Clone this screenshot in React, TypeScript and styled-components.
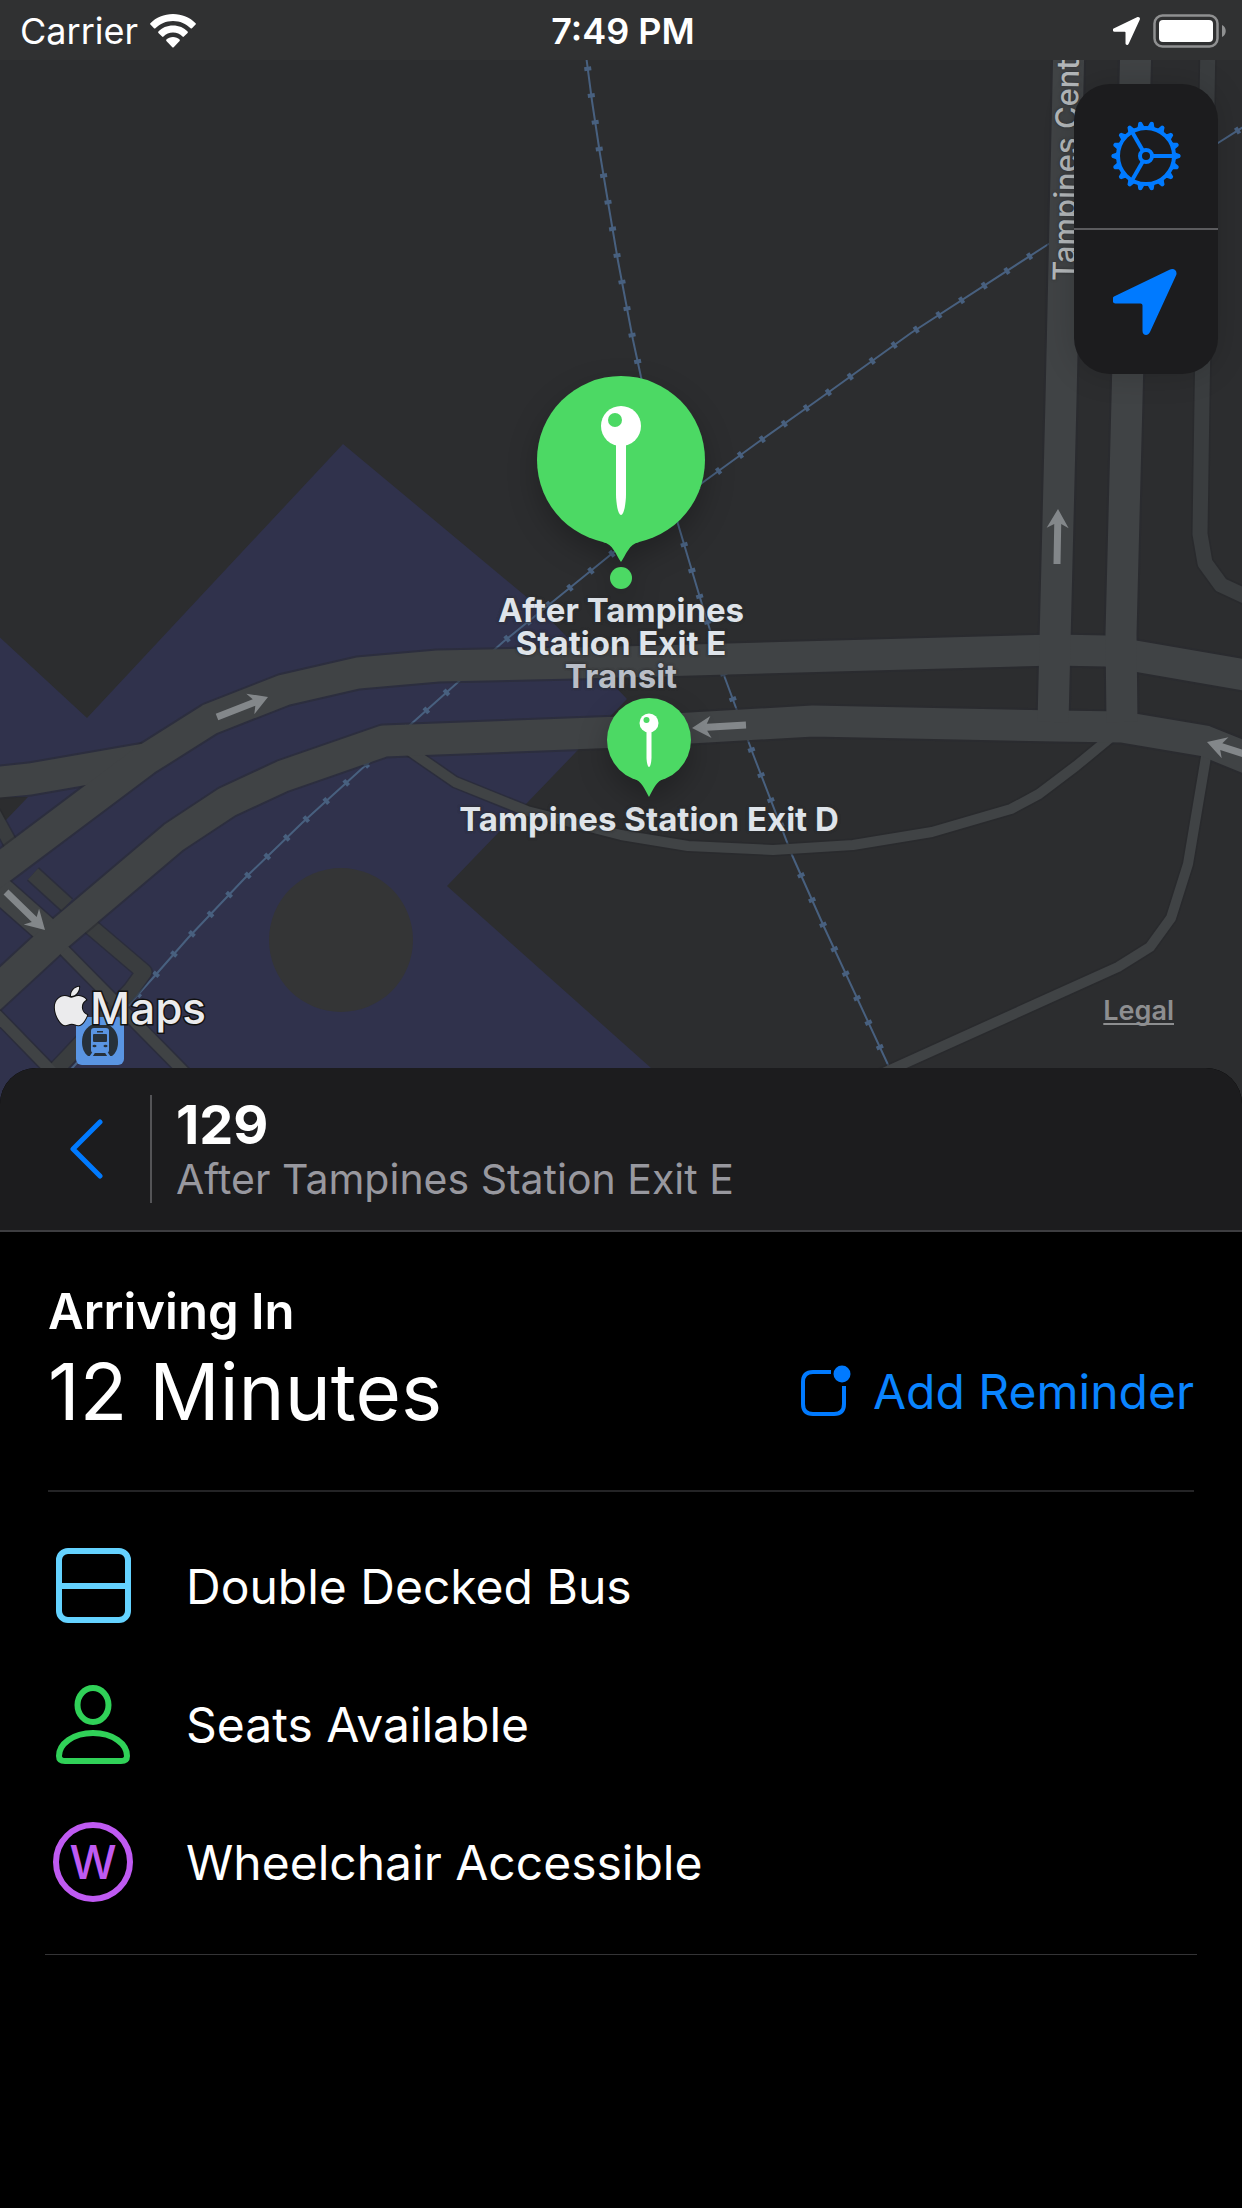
import React from 'react';
import styled, { createGlobalStyle } from 'styled-components';
import { FaApple } from 'react-icons/fa';

const BLUE = '#007aff';
const GREEN = '#4cd964';

const GlobalStyle = createGlobalStyle`
  *, *::before, *::after { box-sizing: border-box; }
  body {
    margin: 0;
    background: #000;
    color: #fff;
    font-family: Inter, "Liberation Sans", sans-serif;
  }
  h1, h2, p, ul { margin: 0; padding: 0; }
  button { font: inherit; border: 0; padding: 0; background: none; cursor: pointer; }
  svg { display: block; }
`;

const Screen = styled.div`
  min-height: 100vh;
  display: flex;
  flex-direction: column;
`;

const StatusBar = styled.header`
  height: 60px;
  padding: 2px 16px 0 20px;
  display: grid;
  grid-template-columns: 1fr auto 1fr;
  align-items: center;
  background: #303132;
  font-size: 36px;
  line-height: 58px;
`;

const StatusGroup = styled.div<{ $end?: boolean }>`
  display: flex;
  align-items: center;
  justify-content: ${(p) => (p.$end ? 'flex-end' : 'flex-start')};
  gap: 12px;
`;

const Clock = styled.time`
  font-weight: 600;
`;

const MapArea = styled.section`
  position: relative;
  height: 1048px;
  margin-bottom: -40px;
  overflow: hidden;
  background: #2c2d2f;
`;

const MapCanvas = styled.svg`
  width: 100%;
  height: 100%;
`;

const Pin = styled.div<{ $shift: number; $top: number }>`
  position: absolute;
  left: calc(50% + ${(p) => p.$shift}px);
  top: ${(p) => p.$top}px;
  transform: translateX(-50%);
  display: flex;
  flex-direction: column;
  align-items: center;
  filter: drop-shadow(0 12px 14px rgba(0, 0, 0, 0.25));
`;

const PlaceLabel = styled.div<{ $shift: number; $top: number }>`
  position: absolute;
  left: calc(50% + ${(p) => p.$shift}px);
  top: ${(p) => p.$top}px;
  transform: translateX(-50%);
  font-size: 33px;
  line-height: 33px;
  font-weight: 700;
  text-align: center;
  white-space: nowrap;
  color: #dfe4ea;
  text-shadow: 0 0 3px #2c2d2f, 0 0 3px #2c2d2f;
`;

const PlaceKind = styled.div`
  color: #b9bec7;
`;

const StreetName = styled.div`
  position: absolute;
  left: calc(50% + 425px);
  bottom: 827px;
  writing-mode: vertical-rl;
  transform: rotate(181deg);
  font-size: 31px;
  line-height: 40px;
  font-weight: 500;
  white-space: nowrap;
  color: #b2b6b8;
  text-shadow: 0 0 3px #2c2d2f;
`;

const MapControls = styled.div`
  position: absolute;
  top: 24px;
  right: 24px;
  width: 144px;
  border-radius: 36px;
  background: #1c1c1e;
  overflow: hidden;
  box-shadow: 0 0 32px rgba(0, 0, 0, 0.16);
`;

const ControlButton = styled.button`
  width: 100%;
  height: 144px;
  display: grid;
  place-items: center;

  & + & {
    height: 146px;
    border-top: 2px solid #5b5b5e;
  }
`;

const StationBadge = styled.div`
  position: absolute;
  left: 76px;
  bottom: 43px;
`;

const Attribution = styled.div`
  position: absolute;
  left: 54px;
  bottom: 72px;
  display: flex;
  align-items: center;
  gap: 2px;
  font-size: 44px;
  line-height: 56px;
  font-weight: 500;
  color: #ebebed;
  -webkit-text-stroke: 3px #111;
  paint-order: stroke fill;

  svg {
    width: 34px;
    height: 44px;
    margin-bottom: 4px;
    overflow: visible;
    stroke: #111;
    stroke-width: 24px;
    paint-order: stroke fill;
  }
`;

const LegalLink = styled.a`
  position: absolute;
  right: 68px;
  bottom: 80px;
  font-size: 27px;
  line-height: 34px;
  font-weight: 600;
  color: #8d8e90;
  text-decoration: underline;
  text-decoration-thickness: 2px;
  text-underline-offset: 3px;
  text-decoration-skip-ink: none;
`;

const Sheet = styled.main`
  position: relative;
  flex: 1;
  display: flex;
  flex-direction: column;
  border-radius: 36px 36px 0 0;
  background: #000;
  overflow: hidden;
`;

const SheetHeader = styled.div`
  display: flex;
  align-items: center;
  height: 164px;
  padding: 0 48px 0 46px;
  background: #1c1c1e;
  border-bottom: 2px solid #3d3d40;
`;

const BackButton = styled.button`
  width: 80px;
  height: 108px;
  display: grid;
  place-items: center;
`;

const HeaderTitles = styled.div`
  margin-left: 24px;
  padding-left: 24px;
  height: 108px;
  border-left: 2px solid #545457;
`;

const ServiceNumber = styled.h1`
  font-size: 54px;
  line-height: 60px;
  font-weight: 700;
`;

const StopName = styled.p`
  font-size: 41px;
  line-height: 48px;
  color: #98989f;
`;

const Details = styled.div`
  padding: 0 48px;
`;

const Arrival = styled.section`
  display: flex;
  align-items: flex-end;
  justify-content: space-between;
  padding: 50px 0 48px;
  border-bottom: 2px solid #242426;
`;

const ArrivalTitle = styled.h2`
  font-size: 49px;
  line-height: 60px;
  font-weight: 600;
`;

const ArrivalTime = styled.p`
  font-size: 78px;
  line-height: 100px;
`;

const ReminderButton = styled.button`
  display: flex;
  align-items: center;
  gap: 21px;
  height: 102px;
  font-size: 48px;
  color: #0a84ff;
`;

const FeatureList = styled.ul`
  list-style: none;
  margin: 0 -3px;
  padding: 25px 3px 23px;
  border-bottom: 1px solid #343436;
`;

const Feature = styled.li`
  display: flex;
  align-items: center;
  gap: 48px;
  height: 138px;
  font-size: 48px;

  svg { width: 90px; height: 90px; flex: none; }
`;

type Pt = [number, number];
const line = (pts: Pt[]) => 'M' + pts.map((p) => p.join(' ')).join('L');

const majorRoads = [
  line([[-20, 784], [30, 779], [145, 759]]),
  line([[-20, 884], [145, 760], [210, 719], [284, 690], [358, 673], [438, 666], [621, 662], [1055, 650], [1106, 651], [1262, 678]]),
  line([[-20, 1007], [57, 936], [174, 837], [227, 802], [283, 776], [384, 741], [621, 732], [813, 721], [1057, 726], [1122, 727], [1205, 741], [1262, 764]]),
  line([[1069, 40], [1061, 400], [1053, 722]]),
  line([[1136, 40], [1127, 400], [1121, 634], [1122, 722]]),
];

const sideRoads: { d: string; w: number }[] = [
  { d: line([[1208, 40], [1202, 400], [1200, 534], [1205, 563], [1221, 585], [1262, 604]]), w: 15 },
  { d: line([[-10, 806], [14, 850]]), w: 13 },
  { d: line([[33, 874], [67, 905]]), w: 15 },
  { d: line([[90, 926], [144, 972], [131, 990], [50, 1076]]), w: 15 },
];

const minorRoads: { d: string; w: number }[] = [
  { d: line([[400, 744], [455, 782], [527, 811], [621, 835], [688, 846], [773, 850], [853, 845], [932, 832], [1011, 809], [1039, 794], [1076, 766], [1110, 738]]), w: 10 },
  { d: line([[1208, 745], [1188, 864], [1171, 918], [1150, 947], [1118, 967], [870, 1079]]), w: 10 },
  { d: line([[-20, 872], [57, 940]]), w: 26 },
  { d: line([[60, 946], [190, 1078]]), w: 11 },
  { d: line([[-10, 1008], [60, 1080]]), w: 11 },
];

const transitLines = [
  line([[584, 40], [592, 101], [600, 154], [609, 208], [618, 261], [633, 340], [641, 377], [678, 524], [701, 601], [725, 678], [753, 754], [792, 855], [825, 929], [890, 1069]]),
  line([[1262, 115], [1218, 143], [1047, 245], [911, 333], [815, 402], [757, 443], [702, 483], [614, 552], [503, 642], [410, 725], [302, 823], [244, 879], [188, 938], [152, 979], [66, 1075]]),
];

const arrows: { from: Pt; to: Pt }[] = [
  { from: [217, 717], to: [268, 697] },
  { from: [6, 892], to: [45, 930] },
  { from: [1057, 564], to: [1058, 509] },
  { from: [746, 725], to: [692, 728] },
  { from: [1260, 759], to: [1207, 742] },
];

const DirectionArrow = ({ from, to }: { from: Pt; to: Pt }) => {
  const dx = to[0] - from[0];
  const dy = to[1] - from[1];
  const len = Math.hypot(dx, dy);
  const angle = (Math.atan2(dy, dx) * 180) / Math.PI;
  return (
    <path
      transform={`translate(${from[0]} ${from[1]}) rotate(${angle})`}
      d={`M0-3.5H${len - 15}L${len - 19}-11L${len} 0L${len - 19} 11L${len - 15} 3.5H0Z`}
      fill="#83878a"
    />
  );
};

const MapDrawing = () => (
  <MapCanvas viewBox="0 60 1242 1048" preserveAspectRatio="xMidYMid slice" aria-hidden="true">
    <path
      d="M343 444L535 604L627 699L447 886L651 1068L700 1112H-300V820H6L28 797L-300 790V360L87 718Z"
      fill="#30324c"
    />
    <ellipse cx="341" cy="940" rx="72" ry="72" fill="#343536" />
    {transitLines.map((d) => (
      <g key={d} fill="none" stroke="#48607f">
        <path d={d} strokeWidth="2" />
        <path d={d} strokeWidth="7" strokeDasharray="4 23" />
      </g>
    ))}
    <g fill="none" strokeLinejoin="round">
      {[...sideRoads, ...minorRoads].map((r) => (
        <path key={r.d} d={r.d} stroke="#26282c" strokeOpacity="0.5" strokeWidth={r.w + 3} />
      ))}
      {sideRoads.map((r) => (
        <path key={r.d} d={r.d} stroke="#3a3d3f" strokeWidth={r.w} />
      ))}
      {majorRoads.map((d) => (
        <path key={d} d={d} stroke="#28292f" strokeOpacity="0.5" strokeWidth="35" />
      ))}
      {minorRoads.map((r) => (
        <path key={r.d} d={r.d} stroke="#404345" strokeWidth={r.w} />
      ))}
      {majorRoads.map((d) => (
        <path key={d} d={d} stroke="#404345" strokeWidth="31" />
      ))}
    </g>
    {arrows.map((a) => (
      <DirectionArrow key={a.from.join()} {...a} />
    ))}
  </MapCanvas>
);

const LargePin = () => (
  <svg width="168" height="214" viewBox="0 0 168 214" role="img" aria-label="Selected stop">
    <circle cx="84" cy="84" r="84" fill={GREEN} />
    <path d="M66 166C76 168 79 179 84 186C89 179 92 168 102 166Z" fill={GREEN} />
    <circle cx="84" cy="202" r="11" fill={GREEN} />
    <path d="M79 60h10v58c0 9-2 21-5 21s-5-12-5-21Z" fill="#fff" />
    <circle cx="84" cy="50" r="20" fill="#fff" />
    <circle cx="78" cy="44" r="7" fill={GREEN} />
  </svg>
);

const SmallPin = () => (
  <svg width="84" height="99" viewBox="0 0 84 99" role="img" aria-label="Stop">
    <circle cx="42" cy="42" r="42" fill={GREEN} />
    <path d="M26 80C35 83 38 92 42 99C46 92 49 83 58 80Z" fill={GREEN} />
    <path d="M39.500 30h5v29c0 4-1 10-2.500 10s-2.500-6-2.500-10Z" fill="#fff" />
    <circle cx="42" cy="25" r="9.500" fill="#fff" />
    <circle cx="39.500" cy="22" r="3" fill={GREEN} />
  </svg>
);

const WifiIcon = () => (
  <svg width="46" height="34" viewBox="0 0 46 34" aria-hidden="true" fill="#fff">
    <path d="M23 0C32 0 40 3.500 45.600 9.200q.6.700 0 1.400L42 14.200q-.7.600-1.400 0C36 9.800 30 7 23 7S10 9.800 5.400 14.200q-.7.600-1.400 0L.4 10.600q-.6-.7 0-1.400C6 3.500 14 0 23 0Z" />
    <path d="M23 11.500c6 0 11 2.300 14.600 6q.6.700 0 1.400l-3.700 3.700q-.7.600-1.400 0c-2.500-2.500-5.700-4-9.500-4s-7 1.500-9.500 4q-.7.600-1.400 0l-3.700-3.700q-.6-.7 0-1.400c3.600-3.700 8.600-6 14.600-6Z" />
    <path d="M23 23c2.600 0 5 1 6.600 2.600q.6.700 0 1.400l-5.900 6.200q-.7.600-1.400 0L16.400 27q-.6-.7 0-1.400C18 24 20.400 23 23 23Z" />
  </svg>
);

const ArrowGlyph = ({ size, color }: { size: number; color: string }) => (
  <svg width={size} height={size} viewBox="1 0 66 66" aria-hidden="true">
    <path
      d="M57.500.8C62-1.500 66 2 64 6.500L38 63c-2 4.500-7.500 3.500-7.500-1V36.500q0-2-2-2H4.500c-5 0-6-5-2-7.300Z"
      fill={color}
    />
  </svg>
);

const BatteryIcon = () => (
  <svg width="73" height="34" viewBox="0 0 73 34" aria-hidden="true">
    <rect x="1.500" y="1.500" width="63" height="31" rx="8" fill="none" stroke="#8f9091" strokeWidth="2.500" />
    <rect x="6" y="6" width="54" height="22" rx="4" fill="#fff" />
    <path d="M69 11c5 2 5 10 0 12Z" fill="#8f9091" />
  </svg>
);

const teeth = Array.from({ length: 18 }, (_, i) => i * 20);

const GearIcon = () => (
  <svg width="72" height="72" viewBox="-36 -36 72 72" aria-hidden="true">
    <g fill={BLUE}>
      {teeth.map((a) => (
        <path key={a} transform={`rotate(${a})`} d="M28-4.500L30.500-3L34-1.800Q35.500 0 34 1.800L30.500 3L28 4.500Z" />
      ))}
    </g>
    <g fill="none" stroke={BLUE} strokeWidth="4">
      <circle r="28" />
      <circle r="6" />
      {[0, 120, 240].map((a) => (
        <path key={a} transform={`rotate(${a})`} d="M7 0H28" />
      ))}
    </g>
  </svg>
);

const StationIcon = () => (
  <svg width="48" height="48" viewBox="0 0 48 48" role="img" aria-label="Train station">
    <rect width="48" height="48" rx="6" fill="#5a95e2" />
    <path d="M15 8h18c6 4 9 9 9 17 0 6-2 11-6 14H12C8 36 6 31 6 25 6 17 9 12 15 8Z" fill="#27313a" />
    <path d="M18 11h12q3 0 3 3v19q0 3-3 3H18q-3 0-3-3V14q0-3 3-3Z" fill="#5a95e2" />
    <rect x="17" y="17" width="14" height="8" rx="1" fill="#27313a" />
    <rect x="21" y="14" width="6" height="1.500" fill="#27313a" />
    <ellipse cx="18.500" cy="29" rx="2" ry="1.200" fill="#27313a" />
    <ellipse cx="29.500" cy="29" rx="2" ry="1.200" fill="#27313a" />
    <path d="M18 35L14 41M30 35L34 41" stroke="#5a95e2" strokeWidth="2.500" />
  </svg>
);

const ChevronIcon = () => (
  <svg width="34" height="60" viewBox="0 0 34 60" aria-hidden="true">
    <path d="M31 3L4 30L31 57" fill="none" stroke={BLUE} strokeWidth="5" strokeLinecap="round" strokeLinejoin="round" />
  </svg>
);

const ReminderIcon = () => (
  <svg width="52" height="52" viewBox="0 0 52 52" aria-hidden="true">
    <path d="M31 7H13Q3 7 3 17V39Q3 49 13 49H34Q44 49 44 39V21" fill="none" stroke={BLUE} strokeWidth="4" />
    <circle cx="42" cy="9" r="8.500" fill={BLUE} />
  </svg>
);

const DeckerIcon = () => (
  <svg viewBox="0 0 90 90" aria-hidden="true" fill="none" stroke="#64d2ff" strokeWidth="6">
    <rect x="11" y="10" width="69" height="69" rx="9" />
    <path d="M11 45H80" />
  </svg>
);

const PersonIcon = () => (
  <svg viewBox="0 0 90 90" aria-hidden="true" fill="none" stroke="#30d158" strokeWidth="6">
    <ellipse cx="45" cy="26" rx="15.500" ry="17" />
    <path d="M17 82Q11 82 11 77C11 65 25 54 45 54S79 65 79 77Q79 82 73 82Z" />
  </svg>
);

const WheelchairIcon = () => (
  <svg viewBox="0 0 90 90" aria-hidden="true">
    <circle cx="45" cy="45" r="37" fill="none" stroke="#bf5af2" strokeWidth="6" />
    <text x="45" y="62" textAnchor="middle" fontSize="47" fontWeight="500" fill="#bf5af2">W</text>
  </svg>
);

const features = [
  { label: 'Double Decked Bus', Icon: DeckerIcon },
  { label: 'Seats Available', Icon: PersonIcon },
  { label: 'Wheelchair Accessible', Icon: WheelchairIcon },
];

export default function App() {
  return (
    <Screen>
      <GlobalStyle />
      <StatusBar>
        <StatusGroup>
          <span>Carrier</span>
          <WifiIcon />
        </StatusGroup>
        <Clock>7:49 PM</Clock>
        <StatusGroup $end>
          <ArrowGlyph size={28} color="#fff" />
          <BatteryIcon />
        </StatusGroup>
      </StatusBar>

      <MapArea aria-label="Map">
        <MapDrawing />
        <StreetName>Tampines Cent</StreetName>
        <StationBadge>
          <StationIcon />
        </StationBadge>
        <PlaceLabel $shift={0} $top={534}>
          After Tampines
          <br />
          Station Exit E
          <PlaceKind>Transit</PlaceKind>
        </PlaceLabel>
        <PlaceLabel $shift={28} $top={743}>Tampines Station Exit D</PlaceLabel>
        <Pin $shift={28} $top={638}>
          <SmallPin />
        </Pin>
        <Pin $shift={0} $top={316}>
          <LargePin />
        </Pin>
        <MapControls>
          <ControlButton type="button" aria-label="Settings">
            <GearIcon />
          </ControlButton>
          <ControlButton type="button" aria-label="Current location">
            <ArrowGlyph size={66} color={BLUE} />
          </ControlButton>
        </MapControls>
        <Attribution>
          <FaApple aria-label="Apple" />
          Maps
        </Attribution>
        <LegalLink href="#legal">Legal</LegalLink>
      </MapArea>

      <Sheet>
        <SheetHeader>
          <BackButton type="button" aria-label="Back">
            <ChevronIcon />
          </BackButton>
          <HeaderTitles>
            <ServiceNumber>129</ServiceNumber>
            <StopName>After Tampines Station Exit E</StopName>
          </HeaderTitles>
        </SheetHeader>
        <Details>
          <Arrival>
            <div>
              <ArrivalTitle>Arriving In</ArrivalTitle>
              <ArrivalTime>12 Minutes</ArrivalTime>
            </div>
            <ReminderButton type="button">
              <ReminderIcon />
              Add Reminder
            </ReminderButton>
          </Arrival>
          <FeatureList>
            {features.map(({ label, Icon }) => (
              <Feature key={label}>
                <Icon />
                {label}
              </Feature>
            ))}
          </FeatureList>
        </Details>
      </Sheet>
    </Screen>
  );
}
